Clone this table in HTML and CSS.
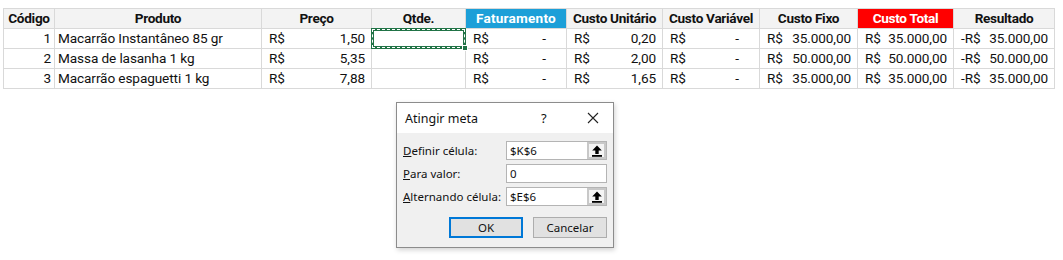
FILE: index.html
```html
<!DOCTYPE html>
<html lang="pt-BR">
<head>
<meta charset="utf-8">
<title>Atingir meta</title>
<link rel="stylesheet" href="styles.css">
</head>
<body>
<div class="sheet">
  <table class="grid">
    <colgroup>
      <col class="c1"><col class="c2"><col class="c3"><col class="c4"><col class="c5"><col class="c6"><col class="c7"><col class="c8"><col class="c9"><col class="c10">
    </colgroup>
    <thead>
      <tr>
        <th>Código</th>
        <th>Produto</th>
        <th>Preço</th>
        <th>Qtde.</th>
        <th class="blue">Faturamento</th>
        <th>Custo Unitário</th>
        <th>Custo Variável</th>
        <th>Custo Fixo</th>
        <th class="red">Custo Total</th>
        <th>Resultado</th>
      </tr>
    </thead>
    <tbody>
      <tr>
        <td class="num">1</td>
        <td>Macarrão Instantâneo 85 gr</td>
        <td><div class="cur"><span>R$</span><span>1,50</span></div></td>
        <td class="sel"><div class="marquee"></div></td>
        <td><div class="cur"><span>R$</span><span class="dash">-</span></div></td>
        <td><div class="cur"><span>R$</span><span>0,20</span></div></td>
        <td><div class="cur"><span>R$</span><span class="dash">-</span></div></td>
        <td><div class="cur"><span>R$</span><span>35.000,00</span></div></td>
        <td><div class="cur"><span>R$</span><span>35.000,00</span></div></td>
        <td><div class="cur"><span>-R$</span><span>35.000,00</span></div></td>
      </tr>
      <tr>
        <td class="num">2</td>
        <td>Massa de lasanha 1 kg</td>
        <td><div class="cur"><span>R$</span><span>5,35</span></div></td>
        <td></td>
        <td><div class="cur"><span>R$</span><span class="dash">-</span></div></td>
        <td><div class="cur"><span>R$</span><span>2,00</span></div></td>
        <td><div class="cur"><span>R$</span><span class="dash">-</span></div></td>
        <td><div class="cur"><span>R$</span><span>50.000,00</span></div></td>
        <td><div class="cur"><span>R$</span><span>50.000,00</span></div></td>
        <td><div class="cur"><span>-R$</span><span>50.000,00</span></div></td>
      </tr>
      <tr>
        <td class="num">3</td>
        <td>Macarrão espaguetti 1 kg</td>
        <td><div class="cur"><span>R$</span><span>7,88</span></div></td>
        <td></td>
        <td><div class="cur"><span>R$</span><span class="dash">-</span></div></td>
        <td><div class="cur"><span>R$</span><span>1,65</span></div></td>
        <td><div class="cur"><span>R$</span><span class="dash">-</span></div></td>
        <td><div class="cur"><span>R$</span><span>35.000,00</span></div></td>
        <td><div class="cur"><span>R$</span><span>35.000,00</span></div></td>
        <td><div class="cur"><span>-R$</span><span>35.000,00</span></div></td>
      </tr>
    </tbody>
  </table>

  <div class="dialog">
    <div class="titlebar">
      <span class="title">Atingir meta</span>
      <span class="help">?</span>
      <svg class="close" width="12" height="12" viewBox="0 0 12 12"><path d="M1 1 L11 11 M11 1 L1 11" stroke="#222" stroke-width="1.1" fill="none"/></svg>
    </div>
    <div class="body">
      <div class="row">
        <span class="label"><u>D</u>efinir célula:</span>
        <div class="field"><span class="val">$K$6</span><span class="pick"><svg width="12" height="12" viewBox="0 0 12 12"><path d="M6 0.5 L1.2 5.5 H4.3 V9 H7.7 V5.5 H10.8 Z" fill="#000"/><rect x="1" y="10" width="10" height="1.8" fill="#000"/></svg></span></div>
      </div>
      <div class="row">
        <span class="label"><u>P</u>ara valor:</span>
        <div class="field"><span class="val">0</span></div>
      </div>
      <div class="row">
        <span class="label"><u>A</u>lternando célula:</span>
        <div class="field"><span class="val">$E$6</span><span class="pick"><svg width="12" height="12" viewBox="0 0 12 12"><path d="M6 0.5 L1.2 5.5 H4.3 V9 H7.7 V5.5 H10.8 Z" fill="#000"/><rect x="1" y="10" width="10" height="1.8" fill="#000"/></svg></span></div>
      </div>
      <div class="buttons">
        <button class="btn ok">OK</button>
        <button class="btn">Cancelar</button>
      </div>
    </div>
  </div>
</div>
</body>
</html>
```

FILE: styles.css
```css
html, body {
  margin: 0;
  padding: 0;
  background: #ffffff;
}

.sheet {
  position: relative;
  width: 1063px;
  height: 260px;
  padding: 8px 0 0 3px;
  box-sizing: border-box;
}

.grid {
  border-collapse: collapse;
  table-layout: fixed;
  width: 1052px;
  font-family: Roboto, "Liberation Sans", sans-serif;
  font-size: 13.6px;
  color: #111;
}

.c1 { width: 51px; }
.c2 { width: 207px; }
.c3 { width: 110px; }
.c4 { width: 94px; }
.c5 { width: 101px; }
.c6 { width: 96px; }
.c7 { width: 97px; }
.c8 { width: 98px; }
.c9 { width: 96px; }
.c10 { width: 101px; }

.grid th, .grid td {
  border: 1px solid #d9d9d9;
  height: 19px;
  padding: 0 3px;
  white-space: nowrap;
  overflow: hidden;
  line-height: 19px;
}

.grid td {
  letter-spacing: -0.1px;
}

.grid th {
  background: #f3f3f3;
  font-weight: 700;
  text-align: center;
  letter-spacing: -0.3px;
  padding: 0 1px;
}

.grid th.blue {
  background: #1c9fd8;
  color: #ffffff;
  letter-spacing: 0.2px;
}

.grid th.red {
  background: #ff0000;
  color: #ffffff;
}

.grid td.num {
  text-align: right;
}

.cur {
  display: flex;
  justify-content: space-between;
  padding: 0 3px 0 4px;
}

.cur .dash {
  padding-right: 14px;
}

.grid td.sel {
  position: relative;
  padding: 0;
  overflow: visible;
}

.marquee {
  position: absolute;
  top: -1px;
  left: -1px;
  right: -1px;
  bottom: -1px;
  border: 3px solid #217346;
  z-index: 2;
}

.marquee::before {
  content: "";
  position: absolute;
  top: -2px;
  left: -2px;
  right: -2px;
  bottom: -2px;
  border: 1px dashed #ffffff;
}

.marquee::after {
  content: "";
  position: absolute;
  right: -5px;
  bottom: -5px;
  width: 4px;
  height: 4px;
  background: #217346;
  border: 1px solid #fff;
}

.dialog {
  position: absolute;
  left: 396px;
  top: 102px;
  width: 218px;
  height: 146px;
  box-sizing: border-box;
  border: 1px solid #8c8c8c;
  background: #f0f0f0;
  box-shadow: 1px 2px 5px rgba(0, 0, 0, 0.18);
  font-family: "Noto Sans", "Open Sans", sans-serif;
  font-size: 11.5px;
  color: #111;
}

.titlebar {
  height: 30px;
  background: #ffffff;
  display: flex;
  align-items: center;
  padding: 0 0 0 8px;
}

.title {
  font-size: 12.5px;
  flex: 1;
}

.help {
  font-size: 13px;
  width: 46px;
  text-align: left;
}

.close {
  margin-right: 14px;
}

.body {
  padding: 8px 6px 0 6px;
}

.row {
  display: flex;
  align-items: center;
  height: 19px;
  margin-bottom: 4px;
}

.label {
  width: 103px;
}

.field {
  width: 101px;
  height: 19px;
  box-sizing: border-box;
  border: 1px solid #b4b4b4;
  background: #ffffff;
  display: flex;
  align-items: center;
}

.val {
  flex: 1;
  padding-left: 3px;
}

.pick {
  width: 19px;
  height: 17px;
  box-sizing: border-box;
  border: 2px solid #c8c8c8;
  background: #f4f4f4;
  display: flex;
  align-items: center;
  justify-content: center;
}

.buttons {
  display: flex;
  gap: 10px;
  padding-left: 46px;
  margin-top: 11px;
}

.btn {
  width: 74px;
  height: 21px;
  box-sizing: border-box;
  border: 1px solid #adadad;
  background: #e1e1e1;
  font-family: "Noto Sans", "Open Sans", sans-serif;
  font-size: 11.5px;
  color: #111;
  padding: 0;
}

.btn.ok {
  border: 2px solid #0078d7;
}
```
